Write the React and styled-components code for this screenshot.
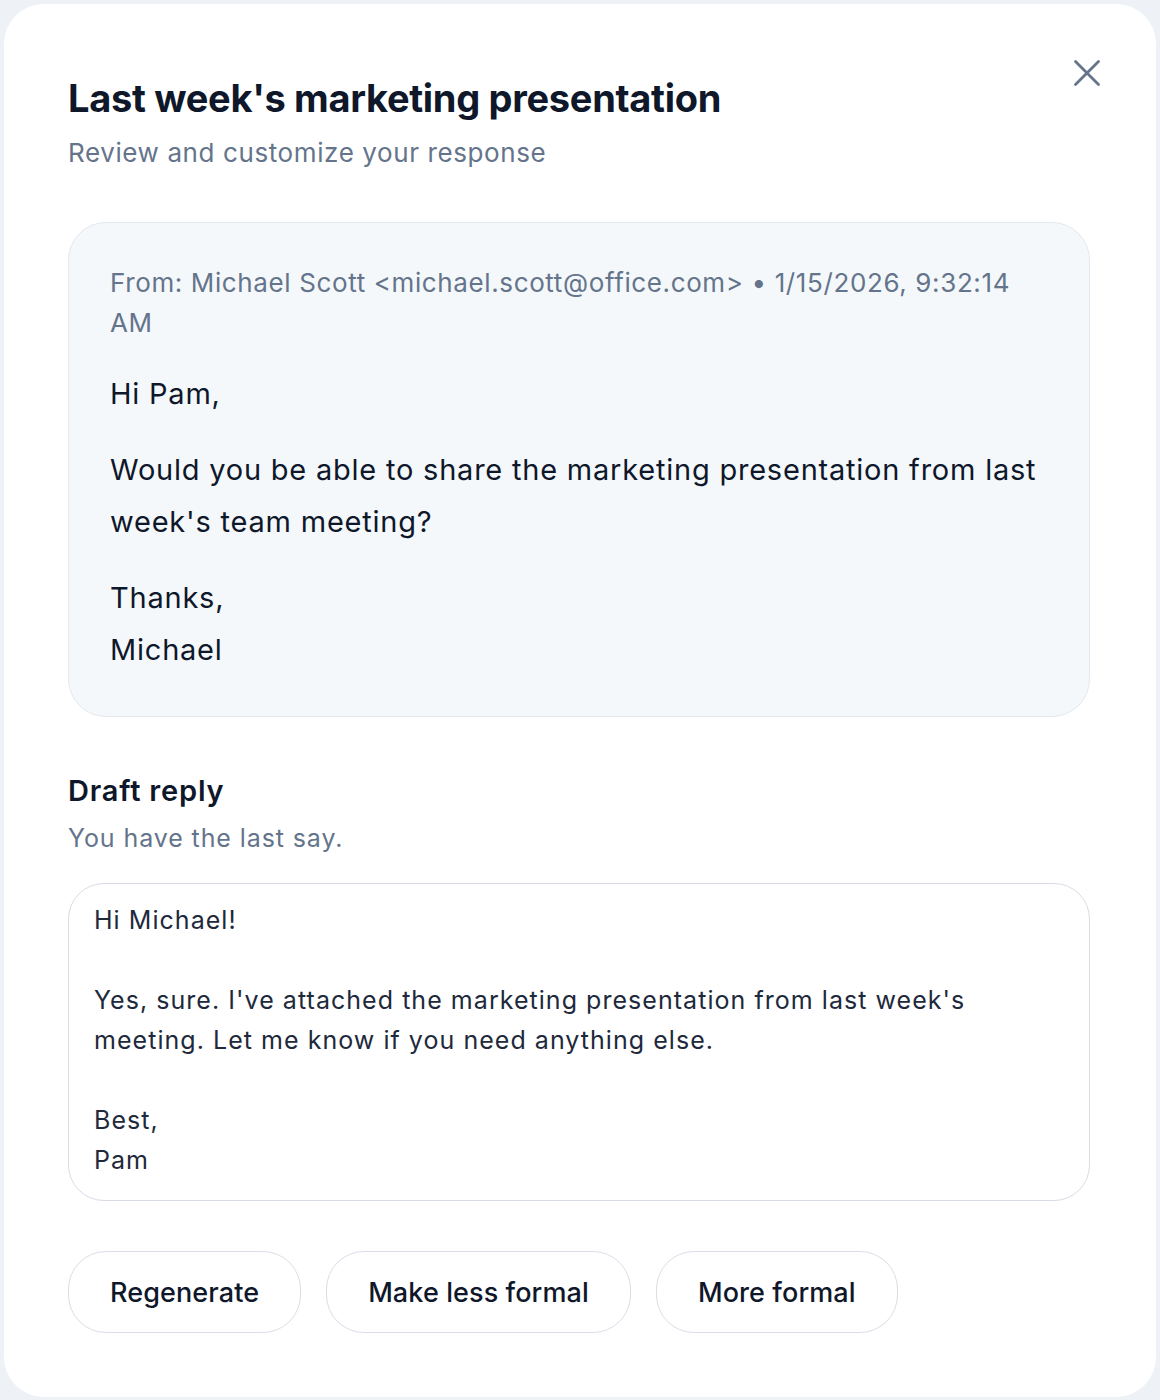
import React from "react";
import styled, { createGlobalStyle } from "styled-components";

const Global = createGlobalStyle`
  html, body { margin: 0; padding: 0; background: #eef2f6; }
  body { font-family: Inter, "Noto Sans", "Liberation Sans", sans-serif; -webkit-font-smoothing: antialiased; }
  * { box-sizing: border-box; }
`;

const Page = styled.div`
  padding: 4px;
`;

const Card = styled.div`
  position: relative;
  width: 1152px;
  background: #ffffff;
  border-radius: 40px;
  padding: 70px 66px 64px 64px;
  display: flex;
  flex-direction: column;
`;

const Title = styled.h1`
  margin: 0;
  font-size: 38px;
  line-height: 48px;
  font-weight: 700;
  color: #0f172a;
  letter-spacing: -0.3px;
`;

const Subtitle = styled.p`
  margin: 13px 0 0;
  font-size: 26px;
  line-height: 36px;
  color: #64748b;
  letter-spacing: 0.6px;
`;

const CloseButton = styled.button`
  position: absolute;
  top: 52px;
  right: 52px;
  width: 34px;
  height: 34px;
  padding: 0;
  border: none;
  background: transparent;
  display: flex;
  align-items: center;
  justify-content: center;
  cursor: pointer;
  color: #64748b;
`;

const EmailBox = styled.div`
  margin-top: 51px;
  background: #f4f8fb;
  border: 1px solid #e3e8ee;
  border-radius: 38px;
  padding: 40px 41px 40px 41px;
`;

const Meta = styled.div`
  font-size: 26px;
  line-height: 40px;
  color: #64748b;
  letter-spacing: 0.62px;
`;

const Body = styled.div`
  margin-top: 25px;
  font-size: 29px;
  line-height: 52px;
  color: #0f172a;
  letter-spacing: 0.78px;
  display: flex;
  flex-direction: column;
  gap: 24px;
`;

const Para = styled.p`
  margin: 0;
`;

const SectionTitle = styled.h2`
  margin: 54px 0 0;
  font-size: 29px;
  line-height: 40px;
  font-weight: 600;
  color: #0f172a;
  letter-spacing: 0.8px;
`;

const SectionHint = styled.p`
  margin: 9px 0 0;
  font-size: 25px;
  line-height: 36px;
  color: #64748b;
  letter-spacing: 0.9px;
`;

const Draft = styled.textarea`
  margin-top: 27px;
  width: 100%;
  height: 318px;
  border: 1.5px solid #d7dce5;
  border-radius: 36px;
  padding: 16px 26px 20px 25px;
  font-family: Inter, "Noto Sans", "Liberation Sans", sans-serif;
  font-size: 25px;
  line-height: 40px;
  letter-spacing: 1.04px;
  color: #1e293b;
  background: #ffffff;
  resize: none;
  outline: none;
  overflow: hidden;
`;

const Actions = styled.div`
  margin-top: 50px;
  display: flex;
  gap: 25px;
`;

const Pill = styled.button`
  height: 82px;
  padding: 0 41px;
  border: 1.5px solid #d9dee7;
  border-radius: 38px;
  background: #ffffff;
  font-family: Inter, "Noto Sans", "Liberation Sans", sans-serif;
  font-size: 27px;
  font-weight: 500;
  letter-spacing: 0.1px;
  color: #0f172a;
  cursor: pointer;
`;

const draftText = `Hi Michael!

Yes, sure. I've attached the marketing presentation from last week's meeting. Let me know if you need anything else.

Best,
Pam`;

export default function App() {
  return (
    <Page>
      <Global />
      <Card>
        <CloseButton aria-label="Close">
          <svg width="30" height="30" viewBox="0 0 30 30" fill="none">
            <path d="M3.5 3.5L26.5 26.5M26.5 3.5L3.5 26.5" stroke="currentColor" strokeWidth="2.8" strokeLinecap="round" />
          </svg>
        </CloseButton>
        <Title>Last week's marketing presentation</Title>
        <Subtitle>Review and customize your response</Subtitle>
        <EmailBox>
          <Meta>From: Michael Scott &lt;michael.scott@office.com&gt; • 1/15/2026, 9:32:14 AM</Meta>
          <Body>
            <Para>Hi Pam,</Para>
            <Para>Would you be able to share the marketing presentation from last week's team meeting?</Para>
            <Para>
              Thanks,
              <br />
              Michael
            </Para>
          </Body>
        </EmailBox>
        <SectionTitle>Draft reply</SectionTitle>
        <SectionHint>You have the last say.</SectionHint>
        <Draft defaultValue={draftText} />
        <Actions>
          <Pill>Regenerate</Pill>
          <Pill>Make less formal</Pill>
          <Pill>More formal</Pill>
        </Actions>
      </Card>
    </Page>
  );
}
